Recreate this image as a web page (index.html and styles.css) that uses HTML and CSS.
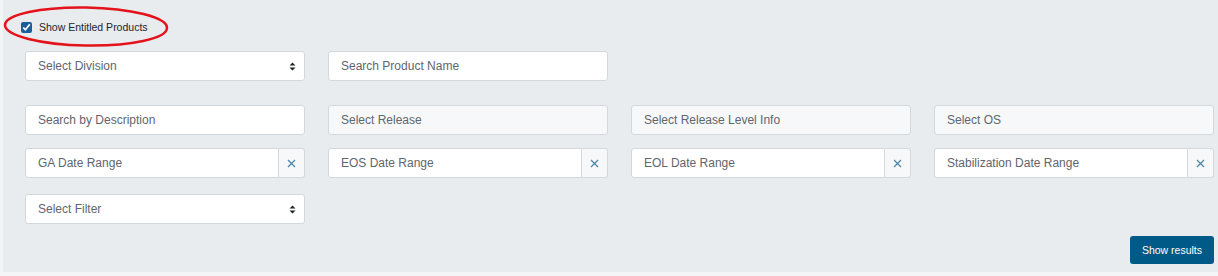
FILE: index.html
```html
<!DOCTYPE html>
<html lang="en">
<head>
  <meta charset="UTF-8">
  <title>Product Search</title>
  <link rel="stylesheet" href="styles.css">
</head>
<body>
  <div class="panel">
    <svg class="annotation" width="180" height="54" viewBox="0 0 180 54">
      <ellipse cx="83" cy="26.5" rx="81" ry="19" fill="none" stroke="#e3121b" stroke-width="2.5" transform="rotate(1 83 26.5)"/>
    </svg>

    <label class="entitled">
      <input type="checkbox" checked>
      <span>Show Entitled Products</span>
    </label>

    <div class="filters row-first">
      <div class="field select">
        <span>Select Division</span>
        <svg width="7" height="9" viewBox="0 0 7 9"><path d="M3.5 0.5 L6.5 3.5 H0.5 Z M3.5 8.5 L6.5 5.5 H0.5 Z" fill="#212529"/></svg>
      </div>
      <input class="field" type="text" placeholder="Search Product Name">
    </div>

    <div class="filters row-second">
      <input class="field" type="text" placeholder="Search by Description">
      <div class="field disabled"><span>Select Release</span></div>
      <div class="field disabled"><span>Select Release Level Info</span></div>
      <div class="field disabled"><span>Select OS</span></div>
    </div>

    <div class="filters row-third">
      <div class="date-group">
        <input class="field" type="text" placeholder="GA Date Range">
        <button class="clear"><svg width="9" height="9" viewBox="0 0 9 9"><path d="M1 1 L8 8 M8 1 L1 8" stroke="#4f87ab" stroke-width="1.3"/></svg></button>
      </div>
      <div class="date-group">
        <input class="field" type="text" placeholder="EOS Date Range">
        <button class="clear"><svg width="9" height="9" viewBox="0 0 9 9"><path d="M1 1 L8 8 M8 1 L1 8" stroke="#4f87ab" stroke-width="1.3"/></svg></button>
      </div>
      <div class="date-group">
        <input class="field" type="text" placeholder="EOL Date Range">
        <button class="clear"><svg width="9" height="9" viewBox="0 0 9 9"><path d="M1 1 L8 8 M8 1 L1 8" stroke="#4f87ab" stroke-width="1.3"/></svg></button>
      </div>
      <div class="date-group">
        <input class="field" type="text" placeholder="Stabilization Date Range">
        <button class="clear"><svg width="9" height="9" viewBox="0 0 9 9"><path d="M1 1 L8 8 M8 1 L1 8" stroke="#4f87ab" stroke-width="1.3"/></svg></button>
      </div>
    </div>

    <div class="filters row-fourth">
      <div class="field select">
        <span>Select Filter</span>
        <svg width="7" height="9" viewBox="0 0 7 9"><path d="M3.5 0.5 L6.5 3.5 H0.5 Z M3.5 8.5 L6.5 5.5 H0.5 Z" fill="#212529"/></svg>
      </div>
    </div>

    <div class="actions">
      <button class="show-results">Show results</button>
    </div>
  </div>
</body>
</html>
```

FILE: styles.css
```css
body {
  margin: 0;
  background-color: #f4f5f7;
  font-family: "Liberation Sans", Arial, sans-serif;
}
.panel {
  position: relative;
  margin-left: 3px;
  height: 272px;
  box-sizing: border-box;
  padding: 21px 4px 0 22px;
  background-color: #e9ecef;
}
.annotation {
  position: absolute;
  left: 0;
  top: 0;
  pointer-events: none;
}
.entitled {
  display: flex;
  align-items: center;
  gap: 7px;
  height: 12px;
  margin-left: -4px;
  font-size: 10.5px;
  color: #212529;
}
.entitled input {
  width: 11px;
  height: 11px;
  margin: 0;
  accent-color: #1b5e9a;
}
.filters {
  display: grid;
  grid-template-columns: repeat(4, 1fr);
  column-gap: 23px;
}
.row-first {
  margin-top: 18px;
}
.row-second {
  margin-top: 24px;
}
.row-third {
  margin-top: 13px;
}
.row-fourth {
  margin-top: 16px;
}
.field {
  display: flex;
  align-items: center;
  justify-content: space-between;
  height: 30px;
  min-width: 0;
  box-sizing: border-box;
  padding: 0 12px;
  border: 1px solid #d3d8dd;
  border-radius: 3px;
  background: #fff;
  font-family: inherit;
  font-size: 12px;
  color: #5f666d;
  outline: none;
}
.field::placeholder {
  color: #5f666d;
}
.select svg {
  margin-right: -4px;
}
.disabled {
  background: #f7f8fa;
}
.date-group {
  display: flex;
}
.date-group .field {
  flex: 1;
  width: 0;
  border-radius: 3px 0 0 3px;
}
.clear {
  display: flex;
  align-items: center;
  justify-content: center;
  width: 26px;
  height: 30px;
  padding: 0;
  border: 1px solid #d3d8dd;
  border-left: none;
  border-radius: 0 3px 3px 0;
  background: #f7f8fa;
}
.actions {
  display: flex;
  justify-content: flex-end;
  margin-top: 12px;
}
.show-results {
  height: 28px;
  padding: 0 12px;
  border: none;
  border-radius: 3px;
  background-color: #005a87;
  color: #fff;
  font-family: inherit;
  font-size: 10.5px;
}
```
